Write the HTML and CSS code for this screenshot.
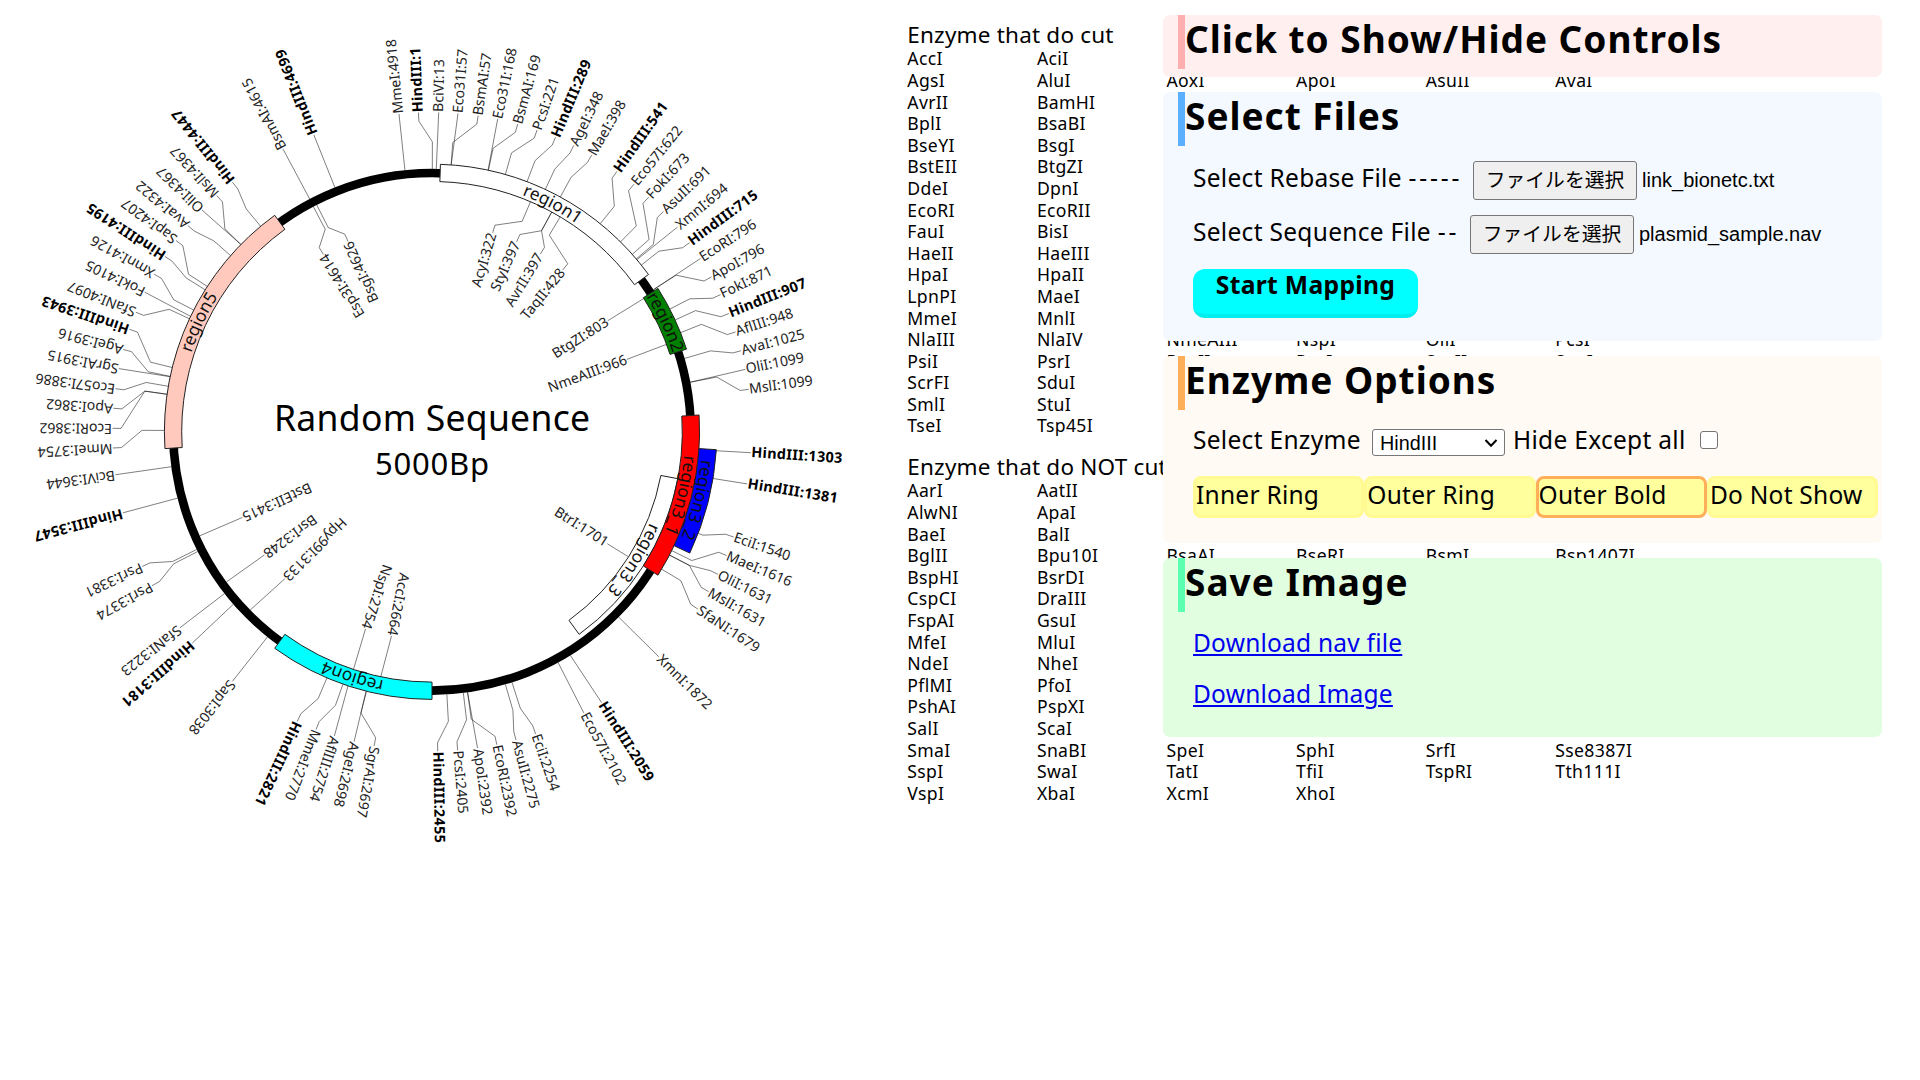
FILE: index.html
```html
<!DOCTYPE html>
<html lang="en">
<head>
<meta charset="utf-8">
<title>Plasmid Map</title>
<link rel="stylesheet" href="styles.css">
</head>
<body>
<main class="page">
  <svg class="map" id="map" width="890" height="1080" viewBox="0 0 890 1080">
    <circle class="backbone" cx="432" cy="431.8" r="258.8"/>
    <g id="sites"></g>
    <g id="regions"></g>
    <text class="map-title" x="274" y="431.3" textLength="316">Random Sequence</text>
    <text class="map-length" x="375" y="474.7" textLength="114">5000Bp</text>
  </svg>
  <section class="lists">
    <h2 class="list-title">Enzyme that do cut</h2>
    <div class="list" id="cut"></div>
    <h2 class="list-title">Enzyme that do NOT cut</h2>
    <div class="list" id="nocut"></div>
  </section>
</main>

<aside class="controls">
  <section class="panel panel-red">
    <h1 class="panel-title title-toggle">Click to Show/Hide Controls</h1>
  </section>
  <section class="panel panel-blue">
    <h1 class="panel-title">Select Files</h1>
    <div class="file-row">
      <span class="label label-rebase">Select Rebase File <span class="dashes">-----</span></span>
      <button class="file-button">ファイルを選択</button>
      <span class="file-name">link_bionetc.txt</span>
    </div>
    <div class="file-row">
      <span class="label label-sequence">Select Sequence File <span class="dashes">--</span></span>
      <button class="file-button">ファイルを選択</button>
      <span class="file-name">plasmid_sample.nav</span>
    </div>
    <button class="start">Start Mapping</button>
  </section>
  <section class="panel panel-orange">
    <h1 class="panel-title">Enzyme Options</h1>
    <div class="option-row">
      <span class="label label-enzyme">Select Enzyme</span>
      <span class="select">HindIII<svg class="chevron" width="14" height="10" viewBox="0 0 14 10"><path d="M1.5 2 7 7.7 12.5 2"/></svg></span>
      <span class="label label-hide">Hide Except all</span>
      <span class="checkbox"></span>
    </div>
    <div class="modes">
      <div class="mode">Inner Ring</div>
      <div class="mode">Outer Ring</div>
      <div class="mode mode-active">Outer Bold</div>
      <div class="mode">Do Not Show</div>
    </div>
  </section>
  <section class="panel panel-green">
    <h1 class="panel-title">Save Image</h1>
    <a class="link" href="#">Download nav file</a>
    <a class="link" href="#">Download Image</a>
  </section>
</aside>
<script src="map.js"></script>
</body>
</html>
```
FILE: styles.css
```css
* { box-sizing: border-box; }

body {
  margin: 0;
  background: #fff;
  color: #000;
  font-family: "Noto Sans", "Noto Sans CJK JP", sans-serif;
  overflow: hidden;
}

.page {
  display: flex;
  width: 1920px;
  height: 1080px;
}

.map { flex: none; }

.backbone { fill: none; stroke: #000; stroke-width: 8.6; }
.map-title { font-size: 35.5px; }
.map-length { font-size: 31px; }
.site-line { fill: none; stroke: #000; stroke-opacity: .5; stroke-width: 1; }
.site-label { font-size: 14.1px; fill: #222; }
.site-label-bold { font-size: 14.4px; font-weight: 700; fill: #000; }
.region { stroke: #222; stroke-width: 1; }
.region-label { font-size: 17.3px; fill: #111; }
.arc { fill: none; }

.lists { padding: 22px 0 0 17.3px; }

.list-title {
  margin: 0;
  font-size: 22.5px;
  font-weight: 400;
  line-height: 26px;
  letter-spacing: .2px;
}

.list + .list-title { margin-top: 17px; }

.list {
  display: grid;
  grid-template-columns: repeat(6, 129.6px);
  grid-auto-rows: 21.6px;
  padding-top: .4px;
  font-size: 17.6px;
  line-height: 21.6px;
  letter-spacing: .35px;
}

.controls {
  position: absolute;
  top: 15px;
  left: 1163px;
  width: 719px;
  display: flex;
  flex-direction: column;
  gap: 15px;
}

.panel { border-radius: 7px; padding: 0 4px 0 30px; }
.panel-red { background: #ffefef; height: 62px; }
.panel-blue { background: #f4f9ff; height: 249px; }
.panel-orange { background: #fffaf4; height: 187px; }
.panel-green { background: #e1fee1; height: 179px; }

.panel-title {
  height: 54px;
  margin: 0 0 0 -15px;
  border-left: 7px solid;
  font-size: 37px;
  line-height: 48px;
  letter-spacing: 1px;
  white-space: nowrap;
}

.panel-red .panel-title { border-left-color: #ffafaf; }
.panel-blue .panel-title { border-left-color: #5aafff; }
.panel-orange .panel-title { border-left-color: #ffaf5a; }
.panel-green .panel-title { border-left-color: #5affaf; }

.label {
  font-size: 24.5px;
  line-height: 34px;
  letter-spacing: .3px;
  white-space: nowrap;
}

.dashes { letter-spacing: 2.9px; }
.label-rebase { width: 280px; }
.label-sequence { width: 277px; }

.file-row {
  display: flex;
  align-items: flex-start;
  height: 39px;
  margin-top: 15px;
}

.file-button {
  width: 164px;
  height: 39px;
  padding: 0 0 3px;
  border: 1px solid #767676;
  border-radius: 3px;
  background: #efefef;
  color: #000;
  font: 19.8px/34px "Noto Sans CJK JP", sans-serif;
  white-space: nowrap;
}

.file-name {
  margin-left: 5px;
  font: 20px/38px "Liberation Sans", sans-serif;
}

.start {
  display: block;
  width: 225px;
  height: 49px;
  margin-top: 15px;
  padding: 0 0 13px;
  border: 0;
  border-bottom: 4px solid #00eded;
  border-radius: 12px;
  background: #0ff;
  color: #000;
  font: 700 24.7px/32px "Noto Sans", sans-serif;
  letter-spacing: .3px;
}

.option-row {
  display: flex;
  align-items: flex-start;
  height: 30px;
  margin-top: 13px;
}

.label-enzyme { width: 179px; }
.label-hide { width: 186px; }

.select {
  display: flex;
  justify-content: space-between;
  align-items: center;
  width: 133px;
  height: 27px;
  margin: 6px 8px 0 0;
  padding: 1px 6px 0 7px;
  border: 1px solid #767676;
  border-radius: 3px;
  background: #fff;
  font: 19.8px/25px "Liberation Sans", sans-serif;
}

.chevron { fill: none; stroke: #000; stroke-width: 2; }

.checkbox {
  width: 18px;
  height: 18px;
  margin: 8px 0 0 1px;
  border: 1.5px solid #767676;
  border-radius: 3px;
  background: #fff;
}

.modes { display: flex; margin-top: 23px; }

.mode {
  flex: 0 0 171.3px;
  height: 42px;
  border: 3px solid #fffa91;
  border-radius: 8px;
  background: #ffff9e;
  font-size: 24.5px;
  line-height: 32px;
  letter-spacing: .25px;
  white-space: nowrap;
}

.mode-active { border-color: #ffaf5a; }

.link {
  display: block;
  width: max-content;
  margin-top: 13px;
  color: #00e;
  font-size: 24.5px;
  line-height: 38px;
  letter-spacing: .22px;
  text-decoration: underline;
  text-decoration-thickness: 2px;
  text-underline-offset: 2px;
}

.panel-title + .link { margin-top: 12px; }
```
FILE: map.js
```js
const CX = 432, CY = 431.8, TOTAL = 5000;
const NS = 'http://www.w3.org/2000/svg';

// name, position, x and y of the point where the leader line meets the label
const outer = [
  ['MmeI', 4918, 399, 114], ['HindIII', 1, 418.5, 113], ['BciVI', 13, 438.7, 112.3],
  ['Eco31I', 57, 458, 113.7], ['BsmAI', 57, 478, 116.3], ['Eco31I', 168, 497.7, 119],
  ['BsmAI', 169, 517.7, 124], ['PcsI', 221, 536.7, 131], ['HindIII', 289, 555.3, 137.7],
  ['AgeI', 348, 573.3, 146.3], ['MaeI', 398, 591.3, 155.7], ['HindIII', 541, 616, 172.7],
  ['Eco57I', 622, 632.7, 185.7], ['FokI', 673, 647, 199], ['AsuII', 691, 661.7, 213.3],
  ['XmnI', 694, 676, 228.3], ['HindIII', 715, 687.7, 244], ['EcoRI', 796, 699.7, 259],
  ['ApoI', 796, 710.7, 277.3], ['FokI', 871, 719, 295.3], ['HindIII', 907, 727.7, 314],
  ['AflIII', 948, 735.3, 332], ['AvaI', 1025, 741.3, 350.7], ['OliI', 1099, 745.7, 369.3],
  ['MslI', 1099, 749, 389.3], ['HindIII', 1303, 751, 452.7], ['HindIII', 1381, 747.7, 484],
  ['EciI', 1540, 732.7, 536.7], ['MaeI', 1616, 726, 555.3], ['OliI', 1631, 717.7, 574.3],
  ['MslI', 1631, 708, 591.3], ['SfaNI', 1679, 697.3, 608.7], ['XmnI', 1872, 658.7, 656.7],
  ['HindIII', 2059, 601, 701.7], ['Eco57I', 2102, 583.7, 712.7], ['EciI', 2254, 535.7, 734.3],
  ['AsuII', 2275, 516.3, 741], ['EcoRI', 2392, 497, 745.7], ['ApoI', 2392, 477.7, 749.3],
  ['PcsI', 2405, 457.7, 751], ['HindIII', 2455, 437.7, 752], ['SgrAI', 2697, 374, 746.7],
  ['AgeI', 2698, 354, 742], ['AflIII', 2754, 334.3, 736.3], ['MmeI', 2770, 316, 729.7],
  ['HindIII', 2821, 297.3, 721.3], ['SapI', 3038, 232.7, 681], ['HindIII', 3181, 192.7, 642.7],
  ['SfaNI', 3223, 180, 627.7], ['PsrI', 3374, 152.7, 585.3], ['PsrI', 3381, 143.3, 566],
  ['HindIII', 3547, 123.3, 512.7], ['BciVI', 3644, 115.7, 474.7], ['MmeI', 3754, 113, 448],
  ['EcoRI', 3862, 112.3, 428.3], ['ApoI', 3862, 113.7, 408.3], ['Eco57I', 3886, 115.7, 388.7],
  ['SgrAI', 3915, 119.3, 368.7], ['AgeI', 3916, 122.7, 349.3], ['HindIII', 3943, 129.3, 329.3],
  ['SfaNI', 4097, 136, 312.3], ['FokI', 4105, 145, 292.3], ['XmnI', 4126, 154.3, 274.3],
  ['HindIII', 4195, 165.3, 256.7], ['SapI', 4207, 177, 241.3], ['AvaI', 4322, 188, 225.7],
  ['OliI', 4367, 202.7, 210.7], ['MslI', 4367, 217.7, 196.7], ['HindIII', 4447, 233.3, 183.3],
  ['BsmAI', 4615, 283, 149], ['HindIII', 4699, 314, 135.3]
];

const inner = [
  ['AcyI', 322, 492.7, 232.7], ['StyI', 397, 517, 241], ['AvrII', 397, 540, 254.7],
  ['TaqII', 428, 562.7, 270], ['BtgZI', 803, 607.3, 321], ['NmeAIII', 966, 626, 359.7],
  ['BtrI', 1701, 607.3, 543.7], ['AccI', 2664, 391.7, 635], ['NspI', 2754, 365.7, 628.3],
  ['Hpy99I', 3133, 284.3, 579.3], ['BsrI', 3248, 264.3, 555], ['BstEII', 3415, 242.7, 517.3],
  ['Esp3I', 4614, 323.3, 254.3], ['BsgI', 4626, 347.7, 240.7]
];

// name, start, end, inner radius, colour
const regions = [
  ['region1', 25, 750, 250.3, '#fff'],
  ['region2', 800, 1000, 250.3, '#008000'],
  ['region3_3', 1400, 2000, 233, '#fff'],
  ['region3_1', 1200, 1700, 250.3, '#f00'],
  ['region3_2', 1300, 1600, 267.6, '#00f'],
  ['region4', 2500, 3000, 250.3, '#0ff'],
  ['region5', 3700, 4500, 250.3, '#ffcabd']
];
const THICK = 17.3;

function add(parent, tag, attrs, text) {
  const el = document.createElementNS(NS, tag);
  for (const k in attrs) el.setAttribute(k, attrs[k]);
  if (text) el.textContent = text;
  parent.appendChild(el);
  return el;
}

const toAngle = p => p / TOTAL * 2 * Math.PI;
const pt = (r, a) => (CX + r * Math.sin(a)).toFixed(2) + ' ' + (CY - r * Math.cos(a)).toFixed(2);

function edge(pos, isOuter) {
  let r = isOuter ? 263 : 254.5;
  for (const [, s, e, base] of regions) {
    if (pos < s || pos > e) continue;
    r = isOuter ? Math.max(r, base + THICK) : Math.min(r, base);
  }
  return r;
}

const sites = document.getElementById('sites');

function drawSite([name, pos, x, y], isOuter) {
  const a = toAngle(pos);
  const la = Math.atan2(x - CX, CY - y);
  const [r1, r2, r3] = isOuter ? [290, 311, 319.5] : [229, 216, 208];
  const straight = Math.abs(Math.sin(la - a)) < 0.012;
  const pts = [pt(edge(pos, isOuter), a)];
  if (!straight) pts.push(pt(r1, a), pt(r2, la));
  pts.push(pt(r3, la));
  add(sites, 'path', { class: 'site-line', d: 'M' + pts.join('L') });

  const bold = name === 'HindIII';
  const [tx, ty] = pt(isOuter ? 320 : 207.5, la).split(' ');
  const attrs = {
    class: 'site-label' + (bold ? ' site-label-bold' : ''),
    x: 0, y: 4.4,
    'text-anchor': isOuter ? 'start' : 'end',
    transform: `translate(${tx} ${ty}) rotate(${(la * 180 / Math.PI - 90).toFixed(2)})`
  };
  if (bold) attrs.textLength = 64.7 + 8.8 * (String(pos).length - 1);
  add(sites, 'text', attrs, name + ':' + pos);
}

outer.forEach(s => drawSite(s, true));
inner.forEach(s => drawSite(s, false));

const group = document.getElementById('regions');
regions.forEach(([name, s, e, r, fill]) => {
  const a = toAngle(s), b = toAngle(e), R = r + THICK;
  add(group, 'path', {
    class: 'region', fill,
    d: `M${pt(r, a)}L${pt(R, a)}A${R} ${R} 0 0 1 ${pt(R, b)}L${pt(r, b)}A${r} ${r} 0 0 0 ${pt(r, a)}Z`
  });
});
regions.forEach(([name, s, e, r], i) => {
  const mid = (toAngle(s) + toAngle(e)) / 2, br = r + 3;
  add(group, 'path', { class: 'arc', id: 'arc' + i, d: `M${pt(br, mid - .5)}A${br} ${br} 0 0 1 ${pt(br, mid + .5)}` });
  const t = add(group, 'text', { class: 'region-label', 'text-anchor': 'middle' });
  add(t, 'textPath', { href: '#arc' + i, startOffset: '50%' }, name);
});

const cut = [
  'AccI AciI', 'AgsI AluI AoxI ApoI AsuII AvaI', 'AvrII BamHI', 'BplI BsaBI', 'BseYI BsgI',
  'BstEII BtgZI', 'DdeI DpnI', 'EcoRI EcoRII', 'FauI BisI', 'HaeII HaeIII', 'HpaI HpaII',
  'LpnPI MaeI', 'MmeI MnlI', 'NlaIII NlaIV NmeAIII NspI OliI PcsI', 'PsiI PsrI PvuII RsaI SacII SapI',
  'ScrFI SduI', 'SmlI StuI', 'TseI Tsp45I'
];
const nocut = [
  'AarI AatII', 'AlwNI ApaI', 'BaeI BalI', 'BglII Bpu10I BsaAI BseRI BsmI Bsp1407I', 'BspHI BsrDI',
  'CspCI DraIII', 'FspAI GsuI', 'MfeI MluI', 'NdeI NheI', 'PflMI PfoI', 'PshAI PspXI', 'SalI ScaI',
  'SmaI SnaBI SpeI SphI SrfI Sse8387I', 'SspI SwaI TatI TfiI TspRI Tth111I', 'VspI XbaI XcmI XhoI'
];

function fillList(id, rows) {
  const list = document.getElementById(id);
  rows.forEach((row, r) => row.split(' ').forEach((name, c) => {
    const cell = document.createElement('span');
    cell.textContent = name;
    cell.style.gridArea = `${r + 1} / ${c + 1}`;
    list.appendChild(cell);
  }));
}
fillList('cut', cut);
fillList('nocut', nocut);
```
